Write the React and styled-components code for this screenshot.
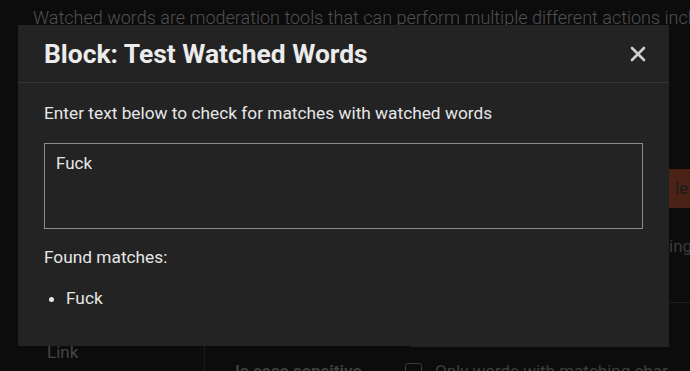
import React from 'react';
import styled, { createGlobalStyle } from 'styled-components';

const GlobalStyle = createGlobalStyle`
  html, body {
    margin: 0;
    padding: 0;
    background: #0c0c0c;
    font-family: Roboto, "Noto Sans", "Liberation Sans", sans-serif;
  }
`;

const Page = styled.div`
  position: relative;
  width: 690px;
  height: 371px;
  overflow: hidden;
  background: #0c0c0c;
  color: #4d4d4d;
`;

const Intro = styled.p`
  margin: 0;
  padding: 7px 0 0 33px;
  height: 23px;
  font-size: 18px;
  line-height: 22px;
  font-weight: 300;
  white-space: nowrap;
  color: #515151;
`;

const Body = styled.div`
  display: flex;
  height: 341px;
`;

const Main = styled.div`
  flex: 1;
  min-width: 0;
  overflow: hidden;
  display: flex;
  flex-direction: column;
  justify-content: flex-end;
`;

const Side = styled.div`
  flex: 0 0 21px;
  display: flex;
  flex-direction: column;
  padding-top: 139px;
  overflow: hidden;
`;

const GhostButton = styled.div`
  height: 39px;
  background: #4a2316;
  color: #1b1b1b;
  font-size: 17px;
  line-height: 39px;
  padding-left: 6px;
  white-space: nowrap;
  overflow: hidden;
`;

const GhostText = styled.div`
  margin-top: 28px;
  height: 20px;
  padding-bottom: 46px;
  font-size: 17px;
  color: #3b3b3b;
  white-space: nowrap;
  overflow: hidden;
  border-bottom: 1px solid #1e1e1e;
`;

const Footer = styled.div`
  display: flex;
  height: 31px;
`;

const NavCol = styled.div`
  flex: 0 0 205px;
  padding: 0 0 0 47px;
  box-sizing: border-box;
  border-right: 1px solid #1a1a1a;
  font-size: 17px;
  color: #454545;
  line-height: 24px;
`;

const FormCol = styled.div`
  flex: 1;
  min-width: 0;
  display: flex;
  flex-direction: column;
`;

const Divider = styled.div`
  margin: 6px 0 0 205px;
  border-top: 1px solid #222;
`;

const FormRow = styled.div`
  display: flex;
  align-items: center;
  padding: 14px 0 0 30px;
  font-size: 17px;
  line-height: 20px;
  color: #3e3e3e;
  white-space: nowrap;
`;

const FieldLabel = styled.span`
  flex: 0 0 170px;
  font-weight: 700;
`;

const Check = styled.span`
  display: inline-flex;
  align-items: center;
  gap: 13px;
  &::before {
    content: '';
    width: 15px;
    height: 15px;
    border: 1px solid #3a3a3a;
    border-radius: 3px;
  }
`;

const Modal = styled.div`
  position: absolute;
  left: 18px;
  top: 25px;
  width: 651px;
  height: 321px;
  background: #232323;
  color: #e6e6e6;
  display: flex;
  flex-direction: column;
`;

const Header = styled.div`
  height: 57px;
  display: flex;
  align-items: center;
  justify-content: space-between;
  padding: 0 21px 0 26px;
  border-bottom: 1px solid #363636;
`;

const Title = styled.h3`
  margin: 0;
  font-size: 26.4px;
  font-weight: 700;
  color: #ececec;
`;

const Close = styled.button`
  background: none;
  border: none;
  padding: 0;
  width: 20px;
  height: 20px;
  display: flex;
  align-items: center;
  justify-content: center;
  cursor: pointer;
`;

const Content = styled.div`
  padding: 18px 26px 0 26px;
  font-size: 17.3px;
  line-height: 24px;
`;

const Lead = styled.p`
  margin: 0 0 18px;
`;

const TextArea = styled.textarea`
  display: block;
  box-sizing: border-box;
  width: 599px;
  height: 86px;
  margin: 0 0 16px;
  padding: 8px 11px;
  resize: none;
  background: #232323;
  color: #e6e6e6;
  border: 1px solid #8c8c8c;
  font-family: inherit;
  font-size: 17px;
  line-height: 22px;
  outline: none;
`;

const Label = styled.p`
  margin: 0 0 17px;
`;

const Matches = styled.ul`
  margin: 0;
  padding-left: 22px;
`;

export default function App() {
  return (
    <>
      <GlobalStyle />
      <Page>
        <Intro>Watched words are moderation tools that can perform multiple different actions including</Intro>
        <Body>
          <Main>
            <Footer>
              <NavCol>Link</NavCol>
              <FormCol>
                <Divider />
                <FormRow>
                  <FieldLabel>Is case sensitive</FieldLabel>
                  <Check>Only words with matching character case</Check>
                </FormRow>
              </FormCol>
            </Footer>
          </Main>
          <Side>
            <GhostButton>lear</GhostButton>
            <GhostText>ing</GhostText>
          </Side>
        </Body>
        <Modal role="dialog">
          <Header>
            <Title>Block: Test Watched Words</Title>
            <Close aria-label="Close">
              <svg width="16" height="16" viewBox="0 0 16 16">
                <path d="M2 2 L14 14 M14 2 L2 14" stroke="#cfcfcf" strokeWidth="2.6" strokeLinecap="round" />
              </svg>
            </Close>
          </Header>
          <Content>
            <Lead>Enter text below to check for matches with watched words</Lead>
            <TextArea defaultValue="Fuck" />
            <Label>Found matches:</Label>
            <Matches>
              <li>Fuck</li>
            </Matches>
          </Content>
        </Modal>
      </Page>
    </>
  );
}
